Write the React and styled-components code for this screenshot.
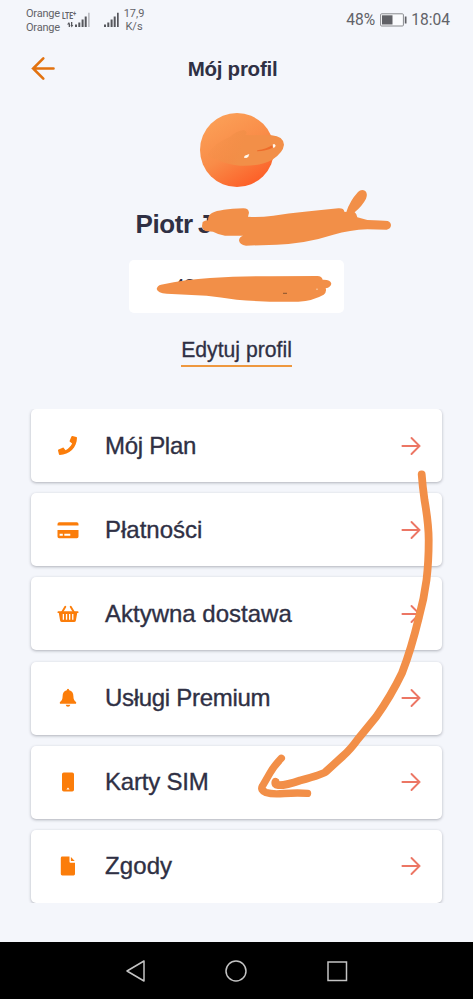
import React from 'react';
import styled, { createGlobalStyle } from 'styled-components';
import { FaPhone } from 'react-icons/fa';

const GlobalStyle = createGlobalStyle`
  * { box-sizing: border-box; }
  body {
    margin: 0;
    background: #f4f6fb;
    font-family: "Liberation Sans", Arial, sans-serif;
    color: #2f3044;
  }
`;

const Screen = styled.div`
  position: relative;
  width: 473px;
  height: 999px;
  display: flex;
  flex-direction: column;
  overflow: hidden;
  background: #f4f6fb;
`;

const StatusBar = styled.div`
  height: 42px;
  flex: none;
  display: flex;
  justify-content: space-between;
  padding: 7px 23px 0 26px;
  font-family: Roboto, sans-serif;
  color: #626368;
`;

const StatusSide = styled.div`
  display: flex;
  align-items: flex-start;
`;

const Carriers = styled.div`
  font-size: 11px;
  line-height: 14px;
  letter-spacing: -0.2px;
  width: 36px;
`;

const Network = styled.div`
  width: 29px;
  height: 22px;
  display: flex;
  flex-direction: column;
`;

const NetworkType = styled.span`
  font-size: 9.5px;
  font-weight: 700;
  line-height: 9px;
  height: 5px;
  margin-top: 4px;
  white-space: nowrap;
  transform: scaleX(0.72);
  transform-origin: 0 0;

  sup {
    font-size: 8px;
    line-height: 0;
    vertical-align: 3px;
  }
`;

const SecondSim = styled.div`
  padding: 5px 0 0 12px;
`;

const Signal = styled.svg`
  display: block;
  flex: none;
  margin-top: ${(props) => (props.$lte ? '-4px' : '0')};
`;

const Speed = styled.div`
  font-size: 11px;
  line-height: 12.5px;
  text-align: center;
  width: 22px;
  margin: 1px 0 0 4px;
`;

const Clock = styled.div`
  display: flex;
  align-items: center;
  height: 26px;
  font-size: 15.6px;
  gap: 4.5px;
`;

const Header = styled.header`
  height: 71px;
  flex: none;
  display: grid;
  grid-template-columns: 70px 1fr 75px;
  padding-left: 31px;
  padding-right: 34px;
  align-items: start;
`;

const BackIcon = styled.svg`
  margin-top: 14px;
`;

const Title = styled.h1`
  margin: 15px 0 0;
  font-size: 20.5px;
  line-height: 24px;
  letter-spacing: -0.25px;
  text-align: center;
`;

const Profile = styled.section`
  height: 296px;
  flex: none;
  display: flex;
  flex-direction: column;
  align-items: center;
`;

const Avatar = styled.div`
  width: 74px;
  height: 74px;
  border-radius: 50%;
  background: linear-gradient(150deg, #fb9d55 15%, #f98c48 50%, #fd5a24 92%);
`;

const Name = styled.h2`
  margin: 21px 0 0;
  width: 202px;
  font-size: 26px;
  line-height: 32px;
  letter-spacing: -0.4px;
  word-spacing: -1.5px;
  white-space: nowrap;
`;

const PhoneBox = styled.div`
  margin-top: 20px;
  width: 215px;
  height: 53px;
  border-radius: 5px;
  background: #fff;
  padding: 14px 45px;
  font-size: 19px;
  line-height: 24px;
`;

const EditLink = styled.a`
  margin-top: 25px;
  height: 29px;
  font-size: 21.2px;
  line-height: 24px;
  border-bottom: 2px solid #ee983f;
  -webkit-text-stroke: 0.3px #2f3044;
`;

const Menu = styled.nav`
  height: 494px;
  flex: none;
  margin: 0 25px;
  padding: 0 6px;
  overflow: hidden;
  display: flex;
  flex-direction: column;
  gap: 11.2px;
`;

const MenuRow = styled.div`
  height: 73px;
  flex: none;
  display: grid;
  grid-template-columns: 22px 1fr 20px;
  column-gap: 26px;
  align-items: center;
  padding: 0 21px 0 26px;
  border-radius: 5px;
  background: #fff;
  box-shadow: 0 1px 3px rgba(40, 45, 60, 0.34);
`;

const MenuLabel = styled.span`
  font-size: 24px;
  line-height: 30px;
  letter-spacing: ${(props) => props.$tracking || 0}px;
  white-space: nowrap;
  -webkit-text-stroke: 0.35px #2f3044;
`;

const Icon = styled.svg`
  display: block;
  fill: #fb7d0a;
`;

const Handset = styled(FaPhone)`
  display: block;
  width: 19px;
  height: 19px;
  margin-left: 1px;
  color: #fb7d0a;
`;

const NavBar = styled.footer`
  margin-top: auto;
  height: 57px;
  flex: none;
  display: flex;
  justify-content: center;
  align-items: center;
  gap: 76.5px;
  padding-right: 1px;
  background: #000;
`;

const NavIcon = styled.svg`
  fill: none;
  stroke: #c4c4c4;
  stroke-width: 1.5;
`;

// hand-drawn marker strokes lying over the whole screen
const Marker = styled.svg`
  position: absolute;
  left: 0;
  top: 0;
  pointer-events: none;
`;

const CardIcon = () => (
  <Icon width="22" height="18" viewBox="0 0 22 18">
    <path d="M.5 4.5V3.1Q.5 1.3 2.3 1.3h17.4q1.8 0 1.8 1.8v1.4z" />
    <path
      fillRule="evenodd"
      d="M.5 9h21v6.600q0 1.600-1.600 1.600H2.100Q.5 17.200.5 15.600zM2.600 12.700v2h3.200v-2zM7.300 12.700v2h6v-2z"
    />
  </Icon>
);

const BasketIcon = () => (
  <Icon width="22" height="18" viewBox="0 0 22 18">
    <path
      fillRule="evenodd"
      d="M1.300 6.300h19.400q.8 0 .8.900t-.8.900h-.5l-1.300 7.400q-.3 1.600-1.900 1.600H5q-1.600 0-1.900-1.600L1.800 8.100h-.5Q.5 8.100.5 7.200t.8-.9zM5.700 9v5.700h1.300V9zM8.900 9v5.700h1.300V9zM12 9v5.700h1.300V9zM15.100 9v5.700h1.300V9z"
    />
    <path d="M5.200 7 8.300 1.700M16.800 7l-3.100-5.300" fill="none" stroke="#fb7d0a" strokeWidth="1.900" strokeLinecap="round" />
  </Icon>
);

const BellIcon = () => (
  <Icon width="22" height="20" viewBox="0 0 22 20">
    <path d="M11 .7q1.200 0 1.200 1.600 4.200 1 4.200 6 0 4.200 2.600 5.800.5.600 0 1.600H3q-.5-1 0-1.600 2.600-1.600 2.600-5.800 0-5 4.200-6Q9.800.700 11 .700z" />
    <path d="M8.700 16.700h4.600Q13 18.800 11 18.800t-2.300-2.100z" />
  </Icon>
);

const PhoneIcon = () => (
  <Icon width="22" height="20" viewBox="0 0 22 20">
    <path
      fillRule="evenodd"
      d="M6.800.5h8.400q1.800 0 1.800 1.800v15.400q0 1.800-1.800 1.800H6.800Q5 19.500 5 17.700V2.300Q5 .5 6.800.5zM11 15.500l-1.600 2h3.200z"
    />
  </Icon>
);

const FileIcon = () => (
  <Icon width="22" height="20" viewBox="0 0 22 20">
    <path d="M5.200.6h7.300v5.100q0 1 1 1H18v11.400q0 1.400-1.400 1.400H5.200q-1.400 0-1.400-1.400V2Q3.800.6 5.200.6z" />
    <path d="M13.900.9 17.700 5.100h-3.800z" />
  </Icon>
);

const ArrowRight = () => (
  <svg width="20" height="20" viewBox="0 0 20 20" fill="none" stroke="#ec7664" strokeWidth="1.900" strokeLinecap="round">
    <path d="M1.400 10h17M10.500 2l8 8-8 8" />
  </svg>
);

const Bars = ({ lte }) => (
  <Signal $lte={lte} width={lte ? 28 : 16} height="16" viewBox={lte ? '0 0 28 16' : '12 0 16 16'}>
    <g fill="#56575c">
      <path d="M13 12.500h2V15h-2zM16.300 10.500h2V15h-2zM19.600 7.500h2V15h-2zM22.700 4.500h2V15h-2z" />
      <path d="M26 .8h1.700V15H26z" opacity={lte ? 0.35 : 1} />
      {lte && <path d="M5 12.500 7 10l1 2v3H6.700v-2.500zM9 10h1.300v3h1L9.700 15.500 8.500 13H9z" />}
    </g>
  </Signal>
);

const items = [
  { label: 'Mój Plan', icon: Handset, tracking: -0.3 },
  { label: 'Płatności', icon: CardIcon },
  { label: 'Aktywna dostawa', icon: BasketIcon },
  { label: 'Usługi Premium', icon: BellIcon, tracking: -0.3 },
  { label: 'Karty SIM', icon: PhoneIcon, tracking: -0.2 },
  { label: 'Zgody', icon: FileIcon, tracking: 0.1 },
];

const Scribbles = () => (
  <Marker width="473" height="999" viewBox="0 0 473 999">
    <defs>
      <linearGradient id="avatarInk" gradientUnits="userSpaceOnUse" x1="262" y1="100" x2="370" y2="140">
        <stop offset="0" stopColor="#f28f48" stopOpacity="0" />
        <stop offset="1" stopColor="#f28f48" />
      </linearGradient>
    </defs>
    <g transform="translate(120 100) scale(.33333)" fill="#f28f48">
      {/* avatar */}
      <path
        fill="url(#avatarInk)"
        d="M262 164Q280 130 330 110Q350 92 372 90Q386 96 376 105L455 106Q490 109 492 134Q490 157 456 180Q420 199 360 197Q315 193 290 178Q266 174 262 164z"
      />
      <path d="M412 151Q440 146 460 134L458 143Q438 153 411 154z" fill="#ee6b2a" />
      <path d="M372 173Q372 166 382 164L388 162Q387 171 379 174zM458 134Q464 129 467 137Q465 144 459 143z" fill="#fff8ee" />
      {/* surname */}
      <path d="M248 366Q254 361 264 361Q264 345 276 339Q300 327 370 325Q386 325 387 338L384 350Q415 353 460 347Q550 335 655 325Q672 324 673 335L679 336Q690 302 714 276Q724 266 736 273Q744 281 738 296Q728 316 704 337Q711 342 712 352L742 360Q785 362 803 363Q813 367 813 376Q812 387 800 389L742 388Q690 390 640 404Q560 430 470 434L378 437Q358 434 357 421Q358 410 369 407L315 407Q293 403 279 395L256 393Q246 388 246 378z" />
    </g>
    {/* phone number */}
    <path
      transform="translate(120 250) scale(.33333)"
      fill="#f28f48"
      d="M110 117Q112 106 123 104Q200 88 270 84Q360 77 450 79L592 78Q606 79 608 89Q632 88 634 101Q633 111 617 115Q621 126 611 134Q580 152 535 155Q440 157 350 149Q300 142 260 137L140 131Q113 129 110 117z"
    />
    <path d="M283 293.300h4" stroke="#85532f" />
    <path d="M316 289.200h2" stroke="#f7c8a0" />
    <g fill="none" stroke="#f28f48" strokeLinecap="round" strokeLinejoin="round">
      <path
        strokeWidth="7.800"
        d="M421.700 474.500Q422.500 486 424.500 500Q428.700 524 428.700 540Q428.700 562 426.500 580Q424 599 419 617Q411 650 402 673Q391 696 376 717L358 739Q350 750 343 756L326 771.500Q324 774 300 780.500Q286 785.500 278 785.200Q274.500 785 275.500 781.700"
      />
      <path strokeWidth="7.400" d="M281.300 758.300Q274 766 270 773L262.500 786Q260 790 266 792.500Q272 794.500 284 793.500Q298 792.500 307.500 793.400" />
    </g>
  </Marker>
);

const App = () => (
  <Screen>
    <GlobalStyle />
    <StatusBar>
      <StatusSide>
        <Carriers>
          <div>Orange</div>
          <div>Orange</div>
        </Carriers>
        <Network>
          <NetworkType>LTE<sup>+</sup></NetworkType>
          <Bars lte />
        </Network>
        <SecondSim>
          <Bars />
        </SecondSim>
        <Speed>
          <div>17,9</div>
          <div>K/s</div>
        </Speed>
      </StatusSide>
      <Clock>
        <span>48%</span>
        <svg width="27" height="14" viewBox="0 0 27 14">
          <rect x=".6" y=".8" width="22.800" height="12.200" rx="1" fill="#fafbfd" stroke="#88898d" />
          <rect x="2" y="2.300" width="10.500" height="9.200" fill="#606166" />
          <rect x="24.800" y="3.500" width="1.700" height="7" fill="#606166" />
        </svg>
        <span>18:04</span>
      </Clock>
    </StatusBar>
    <Header>
      <BackIcon width="25" height="25" viewBox="0 0 25 25" fill="none" stroke="#e2720f" strokeWidth="2.600" strokeLinecap="round">
        <path d="M22.500 12.500H2.200M12.300 2.300l-10.200 10.200 10.200 10.200" />
      </BackIcon>
      <Title>Mój profil</Title>
    </Header>
    <Profile>
      <Avatar />
      <Name>Piotr J</Name>
      <PhoneBox>48</PhoneBox>
      <EditLink>Edytuj profil</EditLink>
    </Profile>
    <Menu>
      {items.map(({ label, icon: ItemIcon, tracking }) => (
        <MenuRow key={label}>
          <ItemIcon />
          <MenuLabel $tracking={tracking}>{label}</MenuLabel>
          <ArrowRight />
        </MenuRow>
      ))}
    </Menu>
    <NavBar>
      <NavIcon width="24" height="24" viewBox="0 0 24 24">
        <path d="M20 2v20L3 12z" strokeLinejoin="round" />
      </NavIcon>
      <NavIcon width="24" height="24" viewBox="0 0 24 24">
        <circle cx="12" cy="12" r="10" />
      </NavIcon>
      <NavIcon width="24" height="24" viewBox="0 0 24 24">
        <rect x="3" y="3" width="18.500" height="18.500" />
      </NavIcon>
    </NavBar>
    <Scribbles />
  </Screen>
);

export default App;
